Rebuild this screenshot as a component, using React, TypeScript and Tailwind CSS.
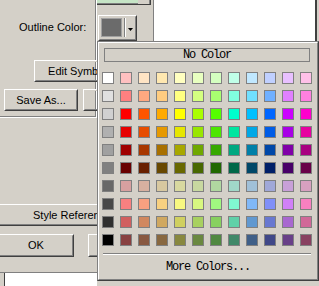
import React from "react";

const rows: string[][] = [
  ["#ffffff", "#ffc0c0", "#ffe4c4", "#ffe8b0", "#ffffc0", "#e8ffc0", "#d4ffc0", "#c0ffe8", "#c0e8ff", "#c0d0ff", "#e8c0ff", "#ffc0e8"],
  ["#e0e0e0", "#ff8080", "#ffa880", "#ffcc80", "#ffff80", "#d4ff80", "#a8ff70", "#80ffe0", "#70e0ff", "#70b0ff", "#e080ff", "#ff80e0"],
  ["#d0d0d0", "#ff0000", "#ff5500", "#ffaa00", "#ffff00", "#aaff00", "#55ff00", "#00ffcc", "#00c0ff", "#0066ff", "#cc00ff", "#ff00cc"],
  ["#b0b0b0", "#e60000", "#e64d00", "#e69900", "#e6e600", "#99e600", "#4de600", "#00e6a0", "#00a8e6", "#005ce6", "#a800e6", "#e600a0"],
  ["#a0a0a0", "#a00000", "#a83800", "#a87000", "#a8a800", "#70a800", "#38a800", "#00a880", "#0080a8", "#0048a8", "#8000a8", "#a80080"],
  ["#808080", "#680000", "#682000", "#684800", "#686800", "#486800", "#206800", "#006848", "#004868", "#002068", "#480068", "#680048"],
  ["#686868", "#d8a0a0", "#d8b0a0", "#d8c8a0", "#d8d8a0", "#c8d8a0", "#b0d8a0", "#a0d8c8", "#a0c0d8", "#a0a8d8", "#c8a0d8", "#d8a0c0"],
  ["#484848", "#f88080", "#f8a080", "#f8d080", "#f8f880", "#d8f880", "#a0f880", "#80f8d0", "#80b8f8", "#8090f8", "#d080f8", "#f880c0"],
  ["#303030", "#d06060", "#d08860", "#d0a860", "#d0d060", "#a8d060", "#88d060", "#60d0a8", "#6098d0", "#6878d0", "#a868d0", "#d06898"],
  ["#000000", "#884040", "#885840", "#886840", "#888840", "#6a8840", "#508840", "#408868", "#406088", "#404888", "#684088", "#884060"],
];

function Btn({ className, inner, children }: { className: string; inner?: string; children?: React.ReactNode }) {
  return (
    <div className={"shrink-0 border border-t-white border-l-white border-r-[#404040] border-b-[#404040] " + className}>
      <div
        className={
          "h-full border border-t-[#d4d0c8] border-l-[#d4d0c8] border-r-[#808080] border-b-[#808080] flex items-center whitespace-nowrap " +
          (inner ?? "justify-center")
        }
      >
        {children}
      </div>
    </div>
  );
}

export default function App() {
  return (
    <div className="relative w-[319px] h-[286px] overflow-hidden bg-[#d4d0c8] text-black font-['Liberation_Sans',Arial,sans-serif] text-[11px] leading-[13px]">
      {/* upper section */}
      <div className="flex h-[118px]">
        <div className="w-[97px] shrink-0 border-r border-r-white border-b border-b-white">
          <div className="h-full border-r border-r-[#808080] border-b border-b-[#808080] flex flex-col">
            <div className="mt-[21px] ml-[19px] h-[13px] whitespace-nowrap">Outline Color:</div>
            <Btn className="mt-[26px] ml-[34px] w-[96px] h-[22px]">Edit Symbol...</Btn>
            <div className="mt-[7px] flex">
              <Btn className="ml-[4px] w-[74px] h-[22px]">Save As...</Btn>
              <Btn className="ml-[5px] w-[74px] h-[22px]">Reset</Btn>
            </div>
          </div>
        </div>
        <div className="w-[56px] shrink-0 flex flex-col">
          <div className="w-[54px] h-[5px] flex border-r border-r-[#404040] border-b border-b-[#404040]">
            <div className="w-[41px] h-full bg-[#c6e5c6] border-b border-b-[#808080]" />
            <div className="flex-1 border-r border-r-[#808080]" />
          </div>
          <div className="mt-[10px] ml-[1px] w-[39px] h-[26px] border border-t-white border-l-white border-r-[#404040] border-b-[#404040]">
            <div className="h-full border border-t-[#d4d0c8] border-l-[#d4d0c8] border-r-[#808080] border-b-[#808080] flex items-start">
              <div className="mt-[1px] ml-[1px] w-[21px] h-[19px] border border-[#a0a0a0] bg-[#6b6b6b]" />
              <div className="mt-[1px] ml-[2px] w-[2px] h-[19px] border-l border-l-[#808080] border-r border-r-white" />
              <svg className="mt-[11px] ml-[2px]" width="5" height="3" viewBox="0 0 5 3">
                <polygon points="0,0 5,0 2.5,3" fill="#000" />
              </svg>
            </div>
          </div>
        </div>
        <div className="w-[164px] shrink-0 border-l border-l-[#808080] bg-white border-r-2 border-r-[#404040]" />
      </div>

      {/* Style references */}
      <Btn className="mt-[86px] ml-[-2px] w-[200px] h-[22px]" inner="justify-start pl-[33px]">
        Style References...
      </Btn>

      {/* OK / Cancel */}
      <div className="mt-[8px] flex">
        <Btn className="ml-[-2px] w-[76px] h-[23px]">OK</Btn>
        <Btn className="ml-[14px] w-[75px] h-[23px]">Cancel</Btn>
      </div>

      {/* bottom list */}
      <div className="mt-[15px] w-[97px] h-[20px] border-t border-t-[#808080]">
        <div className="ml-[4px] h-full border-l border-l-[#404040] bg-white" />
      </div>

      {/* color popup */}
      <div className="absolute left-[97px] top-[41px] w-[222px] h-[240px] bg-[#d4d0c8] border border-t-[#808080] border-l-[#808080] border-r-[#404040] border-b-[#404040]">
        <div className="h-full border border-t-white border-l-white border-r-[#808080] border-b-[#808080] flex flex-col font-['Liberation_Mono',monospace] text-[12px] tracking-[-1.2px]">
          <div className="mt-[5px] ml-[5px] w-[206px] h-[14px] border border-[#808080] flex items-center justify-center">
            No Color
          </div>
          <div className="mt-[10px] ml-[3px] grid grid-cols-[repeat(12,12px)] gap-[6px]">
            {rows.flat().map((c, i) => (
              <div key={i} className="w-[12px] h-[12px] border border-[#808080]" style={{ backgroundColor: c }} />
            ))}
          </div>
          <div className="mt-[7px] ml-[4px] w-[208px] h-[2px] border-t border-t-[#808080] border-b border-b-white" />
          <div className="flex-1 flex items-center justify-center">More Colors...</div>
        </div>
      </div>
    </div>
  );
}
